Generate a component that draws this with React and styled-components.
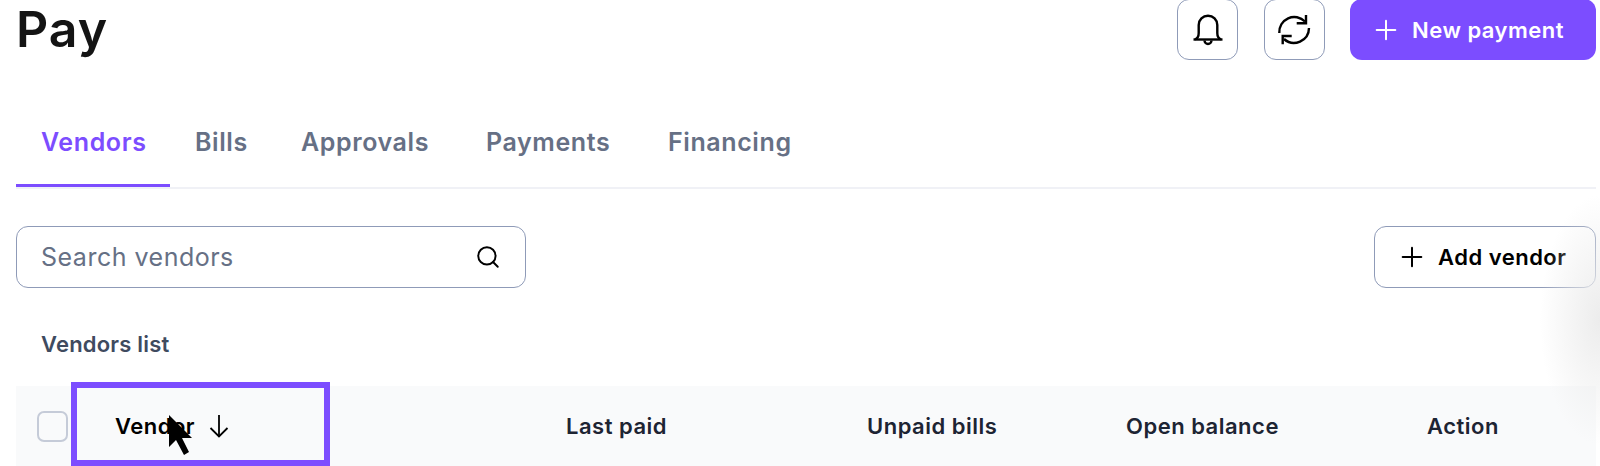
import React from "react";
import styled, { createGlobalStyle } from "styled-components";
import { Plus, Search } from "lucide-react";

const COLOR = {
  purple: "#7c4dff",
  slate: "#667085",
  border: "#8f9bb8",
  ink: "#1d2433",
};

const tabs = ["Vendors", "Bills", "Approvals", "Payments", "Financing"];

const BellIcon = () => (
  <svg width="32" height="32" viewBox="0 0 32 32" fill="none" stroke="#000" strokeWidth="2.4" strokeLinejoin="round">
    <path d="M3 25.500c2.500-1 3.700-3 3.700-6.500V11a9.300 9.300 0 0 1 18.600 0v8c0 3.500 1.200 5.500 3.700 6.500" />
    <path d="M1.500 25.500h29" />
    <path d="M12.500 26.500a3.500 3.500 0 0 0 7 0" />
  </svg>
);

const RefreshIcon = () => (
  <svg width="34" height="34" viewBox="0 0 34 34" fill="none" stroke="#000" strokeWidth="2.4">
    <path d="M2.300 20A15 15 0 0 1 28 8.500" />
    <path d="M29 2v8.300h-9.300" />
    <path d="M32 15A15 15 0 0 1 7 26" />
    <path d="M5.700 31.300V23h9" />
  </svg>
);

const SortArrow = () => (
  <svg width="20" height="24" viewBox="0 0 20 24" fill="none" stroke="#000" strokeWidth="1.8">
    <path d="M10 1v21.500" />
    <path d="M1.500 14l8.500 8.500 8.500-8.500" />
  </svg>
);

const CursorIcon = () => (
  <svg width="24" height="41" viewBox="0 0 24 41">
    <path d="M0 0v32l7-7 8 15 5-3-7-14h10z" fill="#000" />
  </svg>
);

const App = () => (
  <Page>
    <GlobalStyle />
    <Header>
      <Title>Pay</Title>
      <HeaderActions>
        <IconButton aria-label="Notifications"><BellIcon /></IconButton>
        <IconButton aria-label="Refresh"><RefreshIcon /></IconButton>
        <PrimaryButton><Plus size={32} strokeWidth={1.5} />New payment</PrimaryButton>
      </HeaderActions>
    </Header>
    <TabBar>
      {tabs.map((tab, i) => (
        <Tab key={tab} $active={i === 0}>{tab}</Tab>
      ))}
    </TabBar>
    <Toolbar>
      <SearchBox>
        <SearchInput placeholder="Search vendors" />
        <Search size={26} color="#000" strokeWidth={1.8} />
      </SearchBox>
      <OutlineButton><Plus size={32} strokeWidth={1.5} />Add vendor</OutlineButton>
    </Toolbar>
    <ListTitle>Vendors list</ListTitle>
    <TableHeader>
      <CheckCell><Checkbox /></CheckCell>
      <VendorCell>
        Vendor
        <SortArrow />
        <Cursor><CursorIcon /></Cursor>
      </VendorCell>
      <HeaderCell>Last paid</HeaderCell>
      <HeaderCell>Unpaid bills</HeaderCell>
      <HeaderCell>Open balance</HeaderCell>
      <HeaderCell>Action</HeaderCell>
    </TableHeader>
    <EdgeShade />
  </Page>
);

const GlobalStyle = createGlobalStyle`
  html, body {
    margin: 0;
    background: #fff;
    overflow: hidden;
  }
  *, *::before {
    box-sizing: border-box;
  }
`;

const Page = styled.div`
  position: relative;
  width: 1600px;
  height: 466px;
  overflow: hidden;
  font-family: Inter, "Liberation Sans", sans-serif;
`;

const Header = styled.header`
  display: flex;
  justify-content: space-between;
  margin-top: -1px;
  padding: 0 4px 0 16px;
  height: 61px;
`;

const Title = styled.h1`
  margin: 0;
  font-size: 50px;
  line-height: 60px;
  font-weight: 600;
  letter-spacing: 1px;
  color: #141414;
`;

const HeaderActions = styled.div`
  display: flex;
  gap: 25.5px;
`;

const IconButton = styled.button`
  display: flex;
  align-items: center;
  justify-content: center;
  width: 61px;
  height: 61px;
  padding: 0;
  background: #fff;
  border: 1px solid ${COLOR.border};
  border-radius: 12px;
`;

const PrimaryButton = styled.button`
  display: flex;
  align-items: center;
  gap: 10px;
  width: 246px;
  height: 61px;
  padding: 0 0 0 20px;
  border: 0;
  border-radius: 12px;
  background: ${COLOR.purple};
  color: #fff;
  font: 600 22px Inter, sans-serif;
  letter-spacing: 0.5px;
`;

const TabBar = styled.nav`
  display: grid;
  grid-template-columns: 154px 106px 185px 182px 174px;
  margin: 52px 4px 0 16px;
  height: 77px;
  border-bottom: 2px solid #f0f1f6;
`;

const Tab = styled.div`
  height: 75px;
  padding: 12px 0 0 25px;
  font-size: 25px;
  line-height: 36px;
  font-weight: 600;
  letter-spacing: 0.6px;
  color: ${(p) => (p.$active ? COLOR.purple : COLOR.slate)};
  border-bottom: 3px solid ${(p) => (p.$active ? COLOR.purple : "transparent")};
`;

const Toolbar = styled.div`
  display: flex;
  justify-content: space-between;
  margin: 37px 4px 0 16px;
`;

const SearchBox = styled.div`
  display: flex;
  align-items: center;
  justify-content: space-between;
  width: 510px;
  height: 62px;
  padding: 0 24px;
  border: 1px solid ${COLOR.border};
  border-radius: 12px;
`;

const SearchInput = styled.input`
  flex: 1;
  padding: 0;
  border: 0;
  outline: 0;
  font: 400 25px Inter, sans-serif;
  letter-spacing: 0.5px;
  &::placeholder {
    color: ${COLOR.slate};
    opacity: 1;
  }
`;

const OutlineButton = styled.button`
  display: flex;
  align-items: center;
  gap: 10px;
  width: 222px;
  height: 62px;
  padding: 0 0 0 21px;
  background: #fff;
  border: 1px solid ${COLOR.border};
  border-radius: 12px;
  color: #000;
  font: 600 22px Inter, sans-serif;
  letter-spacing: 0.5px;
`;

const ListTitle = styled.h2`
  margin: 42px 0 0 41px;
  font-size: 22px;
  line-height: 28px;
  font-weight: 600;
  letter-spacing: 0.2px;
  color: #3f4b5f;
`;

const TableHeader = styled.div`
  display: grid;
  grid-template-columns: 60px 490px 301px 259px 301px 1fr;
  align-items: center;
  margin: 28px 4px 0 16px;
  height: 80px;
  background: #f9fafb;
`;

const CheckCell = styled.div`
  display: flex;
  padding-left: 21px;
`;

const Checkbox = styled.span`
  display: block;
  width: 31px;
  height: 31px;
  border: 2px solid #c5cbd8;
  border-radius: 7px;
`;

const HeaderCell = styled.div`
  font-size: 22px;
  font-weight: 600;
  letter-spacing: 0.5px;
  color: ${COLOR.ink};
`;

const VendorCell = styled(HeaderCell)`
  position: relative;
  align-self: stretch;
  display: flex;
  align-items: center;
  gap: 14px;
  padding-left: 39px;
  color: #000;
  &::before {
    content: "";
    position: absolute;
    left: -5px;
    top: -4px;
    width: 259px;
    height: 84px;
    border: 6px solid ${COLOR.purple};
  }
`;

const Cursor = styled.div`
  position: absolute;
  left: 93px;
  top: 29px;
  line-height: 0;
`;

const EdgeShade = styled.div`
  position: absolute;
  right: -60px;
  top: 195px;
  width: 120px;
  height: 250px;
  border-radius: 50%;
  background: radial-gradient(closest-side, #ececec, rgba(255, 255, 255, 0));
  pointer-events: none;
`;

export default App;
